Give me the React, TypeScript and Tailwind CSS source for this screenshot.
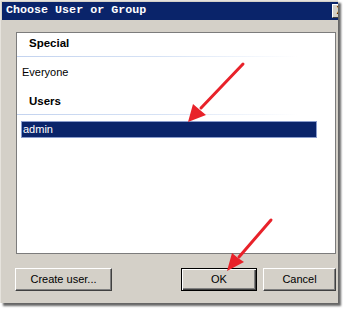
import React from 'react';

const btn =
  "h-[23px] shrink-0 flex items-center justify-center text-[11px] text-black bg-[#d4d0c8] border border-t-white border-l-white border-r-[#404040] border-b-[#404040] shadow-[inset_-1px_-1px_0_#808080]";

const Arrows = () => (
  <svg className="absolute left-0 top-0 pointer-events-none" width="343" height="311" viewBox="0 0 343 311">
    <g stroke="#e8222a" strokeWidth="3" strokeLinecap="round" fill="#e8222a">
      <line x1="243" y1="64" x2="201" y2="108" />
      <line x1="271" y1="220" x2="239" y2="257" />
    </g>
    <g fill="#e8222a">
      <polygon points="188,122 193,104 200,110 206,115" />
      <polygon points="227,271 232,253 238,258 244,262" />
    </g>
  </svg>
);

const App = () => {
  return (
    <div className="relative w-[343px] h-[311px] bg-white overflow-hidden font-['Liberation_Sans',Arial,sans-serif]">
      <div className="w-[338px] h-[303px] bg-[#d4d0c8] border-l border-t border-[#e6e3dd] pl-px pt-px overflow-hidden shadow-[3px_3px_2px_rgba(0,0,0,0.6)]">
        {/* title bar */}
        <div className="flex h-[18px] w-[360px] bg-[#0a246a]">
          <div className="w-[330px] flex items-center pl-[4px] text-white font-bold text-[11.7px] font-['Liberation_Mono',monospace] tracking-[0px]">
            Choose User or Group
          </div>
          <div className="mt-[2px] w-[16px] h-[14px] bg-[#d4d0c8] border border-t-white border-l-white border-r-[#404040] border-b-[#404040] flex items-center justify-center text-[10px] font-bold leading-none">
            X
          </div>
        </div>

        {/* list */}
        <div className="mt-[12px] ml-[14px] w-[320px] h-[222px] bg-white border border-[#7c7c7c]">
          <div className="h-[23px] flex items-end pb-[4px] pl-[12px] text-[11.5px] font-bold text-black">Special</div>
          <div className="h-px w-[281px] bg-gradient-to-r from-[#c3d3ef] via-[#d6e2f5] to-white" />
          <div className="h-[31px] flex items-center pl-[5px] text-[11px] text-black">Everyone</div>
          <div className="h-[26px] flex items-end pb-[4px] pl-[12px] text-[11.5px] font-bold text-black">Users</div>
          <div className="h-px w-[281px] bg-gradient-to-r from-[#c3d3ef] via-[#d6e2f5] to-white" />
          <div className="mt-[6px] ml-[4px] w-[296px] h-[17px] bg-[#0a246a] border border-[#8a9ccc] flex items-center pl-px text-[11px] text-white">
            admin
          </div>
        </div>

        {/* buttons */}
        <div className="flex mt-[14px] pl-[13px]">
          <button className={`${btn} w-[97px]`}>Create user...</button>
          <button className="ml-[69px] w-[76px] h-[23px] shrink-0 flex items-center justify-center text-[11px] text-black bg-[#d4d0c8] border border-black shadow-[inset_1px_1px_0_#fff,inset_-1px_-1px_0_#404040,inset_-2px_-2px_0_#808080]">
            OK
          </button>
          <button className={`${btn} ml-[6px] w-[73px]`}>Cancel</button>
        </div>
      </div>
      <Arrows />
    </div>
  );
};

export default App;
